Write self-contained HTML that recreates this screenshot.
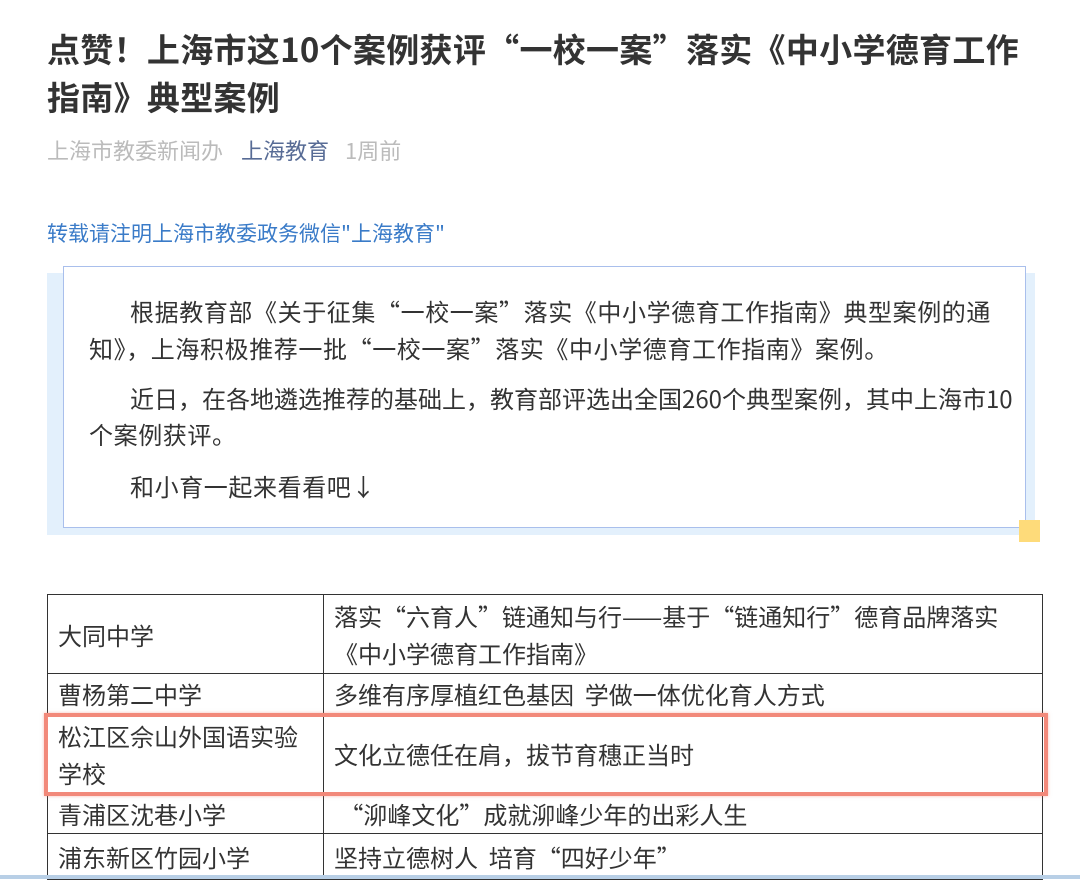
<!DOCTYPE html>
<html><head><meta charset="utf-8"><style>
*{margin:0;padding:0;box-sizing:border-box}
body{width:1080px;height:879px;overflow:hidden;background:#fff;position:relative;font-family:"Noto Sans CJK SC","Liberation Sans",sans-serif;color:#333}
.a{position:absolute;white-space:nowrap}
h1{position:absolute;left:47px;top:24px;font-size:33px;letter-spacing:0.3px;line-height:48px;font-weight:bold;color:#333;white-space:nowrap}
.meta{left:47px;top:135px;font-size:22px;color:#bbb;line-height:30px}
.meta span.b{color:#576b95;margin:0 16px 0 18px}
.link{left:47px;top:219px;font-size:21px;color:#3a7bc8;line-height:28px}
.shadow{position:absolute;left:47px;top:273px;width:988px;height:262px;background:#e3f0fc}
.box{position:absolute;left:63px;top:266px;width:963px;height:262px;border:1.5px solid #a9bfec;background:#fff}
.yel{position:absolute;left:1019px;top:520px;width:21px;height:22px;background:#fedb7a}
.p{position:absolute;left:89px;font-size:24px;color:#333;line-height:37px;white-space:nowrap;letter-spacing:0.6px}
.i{padding-left:41px}
table{position:absolute;left:47px;top:594px;width:996px;border-collapse:collapse;font-size:24px;color:#333}
td{border:1.5px solid #333;padding:0 10px;vertical-align:middle;line-height:37px;white-space:nowrap}
td:first-child{width:276px}
.red{position:absolute;left:44px;top:713px;width:1004px;height:83px;border:4px solid #f2897a;box-shadow:0 0 3px rgba(240,120,100,.5)}
.bot{position:absolute;left:0;top:875px;width:1080px;height:4px;background:#b8cfe6}
</style></head><body>
<h1>点赞！上海市这10个案例获评“一校一案”落实《中小学德育工作<br>指南》典型案例</h1>
<div class="a meta">上海市教委新闻办<span class="b">上海教育</span>1周前</div>
<div class="a link">转载请注明上海市教委政务微信"上海教育"</div>
<div class="shadow"></div>
<div class="box"></div>
<div class="yel"></div>
<div class="p i" style="top:292px">根据教育部《关于征集“一校一案”落实《中小学德育工作指南》典型案例的通</div>
<div class="p" style="top:329px">知》，上海积极推荐一批“一校一案”落实《中小学德育工作指南》案例。</div>
<div class="p i" style="top:379px;letter-spacing:0">近日，在各地遴选推荐的基础上，教育部评选出全国260个典型案例，其中上海市10</div>
<div class="p" style="top:415px">个案例获评。</div>
<div class="p i" style="top:467px">和小育一起来看看吧↓</div>
<table>
<tr style="height:79px"><td>大同中学</td><td>落实“六育人”链通知与行——基于“链通知行”德育品牌落实<br>《中小学德育工作指南》</td></tr>
<tr style="height:40px"><td>曹杨第二中学</td><td>多维有序厚植红色基因&nbsp; 学做一体优化育人方式</td></tr>
<tr style="height:80px"><td>松江区佘山外国语实验<br>学校</td><td>文化立德任在肩，拔节育穗正当时</td></tr>
<tr style="height:40px"><td>青浦区沈巷小学</td><td>&nbsp;“泖峰文化”成就泖峰少年的出彩人生</td></tr>
<tr style="height:46px"><td>浦东新区竹园小学</td><td>坚持立德树人&nbsp; 培育“四好少年”</td></tr>
</table>
<div class="red"></div>
<div class="bot"></div>
</body></html>
